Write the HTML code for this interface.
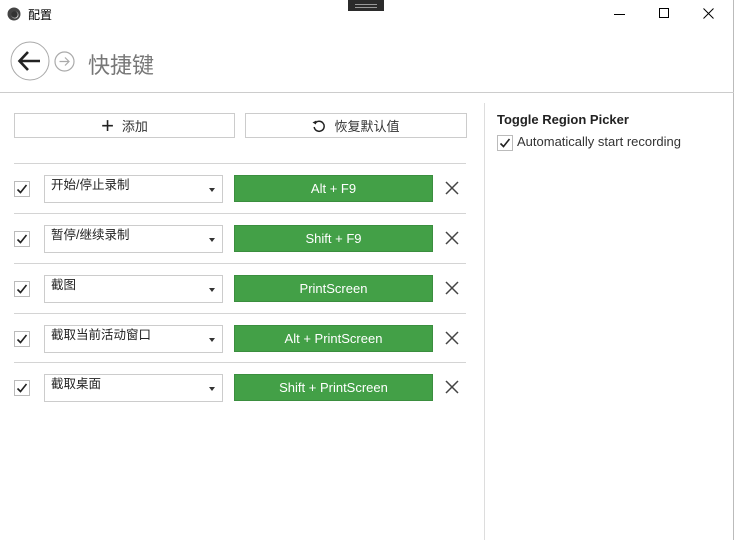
<!DOCTYPE html>
<html><head><meta charset="utf-8"><style>
*{margin:0;padding:0;box-sizing:border-box}
body{width:734px;height:540px;background:#fff;position:relative;overflow:hidden;font-family:"Liberation Sans","Noto Sans CJK SC",sans-serif;color:#222}
.a{position:absolute}
.btn{position:absolute;border:1px solid #ccc;background:#fff;height:25px;top:113px;font-size:13px;color:#333;display:flex;align-items:center;justify-content:center;gap:8px}
.sep{position:absolute;left:14px;width:452px;height:1px;background:#d4d4d4}
.cb{position:absolute;left:14px;width:16px;height:16px;border:1px solid #bbb;background:#fff}
.dd{position:absolute;left:44px;width:179px;height:28px;border:1px solid #ccc;font-size:12.5px;padding:0 6px;line-height:18px}
.dd:after{content:"";position:absolute;right:7px;top:12px;border-left:3.5px solid transparent;border-right:3.5px solid transparent;border-top:4px solid #333}
.gk{position:absolute;left:234px;width:199px;height:27px;background:#43a047;border:1px solid #3b8e3f;color:#fff;font-size:13px;display:flex;align-items:center;justify-content:center}
.x{position:absolute;left:444px;width:16px;height:16px}
</style></head><body>
<svg class="a" style="left:7px;top:7px" width="14" height="14"><circle cx="7" cy="7" r="6.5" fill="#444"/><circle cx="8" cy="8" r="3.5" fill="#ccc"/><circle cx="7.5" cy="7.5" r="3.2" fill="#333"/></svg>
<div class="a" style="left:28px;top:6px;font-size:12px;color:#000">配置</div>
<div class="a" style="left:348px;top:0;width:36px;height:11px;background:#2b2b2b"></div>
<div class="a" style="left:355px;top:4px;width:22px;height:1px;background:#999"></div>
<div class="a" style="left:355px;top:7px;width:22px;height:1px;background:#999"></div>
<div class="a" style="left:614px;top:14px;width:11px;height:1px;background:#000"></div>
<div class="a" style="left:659px;top:8px;width:10px;height:10px;border:1px solid #000"></div>
<svg class="a" style="left:703px;top:8px" width="11" height="11"><path d="M0.5 0.5L10.5 10.5M10.5 0.5L0.5 10.5" stroke="#000" stroke-width="1"/></svg>
<div class="a" style="left:733px;top:0;width:1px;height:540px;background:#bbb"></div>
<svg class="a" style="left:10px;top:41px" width="42" height="42"><circle cx="20" cy="20" r="19" fill="none" stroke="#aaa" stroke-width="1"/><path d="M30 20H10M18 11L9.5 20L18 29" fill="none" stroke="#222" stroke-width="2.6"/></svg>
<svg class="a" style="left:54px;top:51px" width="22" height="22"><circle cx="10.5" cy="10.5" r="9.5" fill="none" stroke="#aaa" stroke-width="1.2"/><path d="M5.5 10.5H15M11 6.5L15 10.5L11 14.5" fill="none" stroke="#aaa" stroke-width="1.2"/></svg>
<div class="a" style="left:88px;top:48px;font-size:22px;color:#777">快捷键</div>
<div class="a" style="left:0;top:92px;width:734px;height:1px;background:#ccc"></div>
<div class="a" style="left:484px;top:103px;width:1px;height:437px;background:#ddd"></div>
<div class="btn" style="left:14px;width:221px"><span style="font-size:22px;font-weight:300;line-height:1;color:#222">+</span>添加</div>
<div class="btn" style="left:245px;width:222px"><svg width="14" height="14"><path d="M3 4.5A5 5 0 1 1 2.2 8" fill="none" stroke="#222" stroke-width="1.5"/><path d="M0.5 3.5L4 5.5L4.3 1.5Z" fill="#222"/></svg>恢复默认值</div>
<div class="sep" style="top:163px"></div><div class="sep" style="top:213px"></div><div class="sep" style="top:263px"></div><div class="sep" style="top:313px"></div><div class="sep" style="top:362px"></div>
<div id="rows"></div>
<div class="a" style="left:497px;top:112px;font-size:13px;font-weight:bold;color:#222">Toggle Region Picker</div>
<div class="cb" style="left:497px;top:135px"></div>
<svg class="a" style="left:499px;top:137px" width="12" height="12"><path d="M1.5 6.5L4.5 9.5L10.5 2" fill="none" stroke="#222" stroke-width="1.6"/></svg>
<div class="a" style="left:517px;top:134px;font-size:13px;color:#333">Automatically start recording</div>
<script>
var d=[["开始/停止录制","Alt + F9"],["暂停/继续录制","Shift + F9"],["截图","PrintScreen"],["截取当前活动窗口","Alt + PrintScreen"],["截取桌面","Shift + PrintScreen"]];
var h="";d.forEach(function(r,i){var c=188+i*50-(i==4?1:0);
h+='<div class="cb" style="top:'+(c-7)+'px"></div><svg class="a" style="left:16px;top:'+(c-5)+'px" width="12" height="12"><path d="M1.5 6.5L4.5 9.5L10.5 2" fill="none" stroke="#222" stroke-width="1.6"/></svg>';
h+='<div class="dd" style="top:'+(c-13)+'px">'+r[0]+'</div>';
h+='<div class="gk" style="top:'+(c-13)+'px">'+r[1]+'</div>';
h+='<svg class="x" style="top:'+(c-8)+'px" width="16" height="16"><path d="M2 2L14 14M14 2L2 14" stroke="#444" stroke-width="1.5"/></svg>';});
document.getElementById("rows").innerHTML=h;
</script>
</body></html>
